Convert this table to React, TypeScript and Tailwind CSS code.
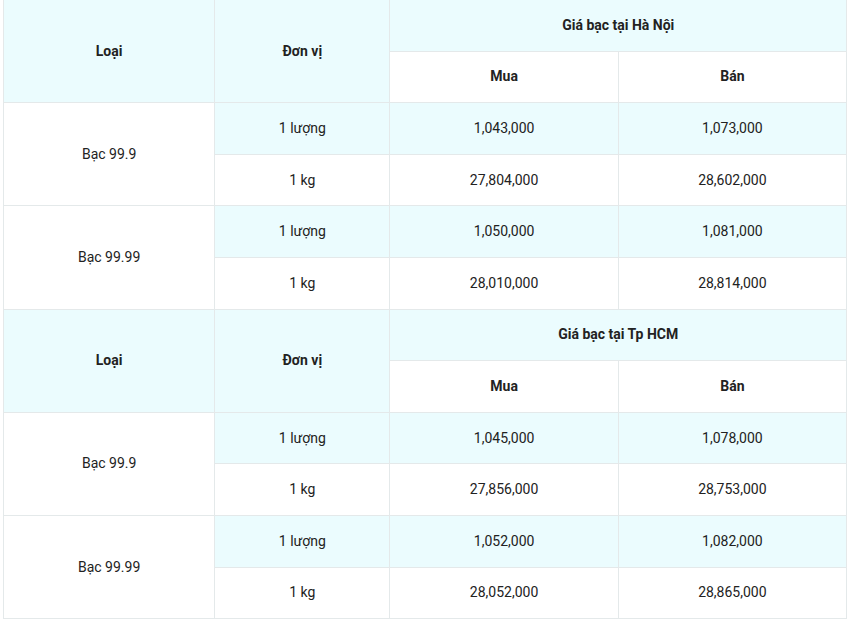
import React from "react";

const CY = "bg-[#ebfcfe]";
const TD = "border border-[#e4e9ea] text-center align-middle p-0";

type Block = {
  city: string;
  rows: { type: string; items: { unit: string; buy: string; sell: string }[] }[];
};

const blocks: Block[] = [
  {
    city: "Giá bạc tại Hà Nội",
    rows: [
      {
        type: "Bạc 99.9",
        items: [
          { unit: "1 lượng", buy: "1,043,000", sell: "1,073,000" },
          { unit: "1 kg", buy: "27,804,000", sell: "28,602,000" },
        ],
      },
      {
        type: "Bạc 99.99",
        items: [
          { unit: "1 lượng", buy: "1,050,000", sell: "1,081,000" },
          { unit: "1 kg", buy: "28,010,000", sell: "28,814,000" },
        ],
      },
    ],
  },
  {
    city: "Giá bạc tại Tp HCM",
    rows: [
      {
        type: "Bạc 99.9",
        items: [
          { unit: "1 lượng", buy: "1,045,000", sell: "1,078,000" },
          { unit: "1 kg", buy: "27,856,000", sell: "28,753,000" },
        ],
      },
      {
        type: "Bạc 99.99",
        items: [
          { unit: "1 lượng", buy: "1,052,000", sell: "1,082,000" },
          { unit: "1 kg", buy: "28,052,000", sell: "28,865,000" },
        ],
      },
    ],
  },
];

export default function App() {
  return (
    <div
      className="w-[850px] h-[621px] bg-white overflow-hidden pl-[3px] pr-[3px] text-[14px] text-[#222]"
      style={{ fontFamily: "Roboto, 'Noto Sans', sans-serif" }}
    >
      <table className="w-[844px] table-fixed border-collapse -mt-px">
        <colgroup>
          <col className="w-[211px]" />
          <col className="w-[175px]" />
          <col className="w-[228px]" />
          <col className="w-[228px]" />
        </colgroup>
        {blocks.map((b, bi) => (
          <tbody key={bi}>
            <tr className="h-[51.6px]">
              <td rowSpan={2} className={`${TD} ${CY} font-bold`}>Loại</td>
              <td rowSpan={2} className={`${TD} ${CY} font-bold`}>Đơn vị</td>
              <td colSpan={2} className={`${TD} ${CY} font-bold`}>{b.city}</td>
            </tr>
            <tr className="h-[51.6px]">
              <td className={`${TD} bg-white font-bold`}>Mua</td>
              <td className={`${TD} bg-white font-bold`}>Bán</td>
            </tr>
            {b.rows.map((r, ri) =>
              r.items.map((it, ii) => (
                <tr key={`${ri}-${ii}`} className="h-[51.6px]">
                  {ii === 0 && (
                    <td rowSpan={2} className={`${TD} bg-white`}>{r.type}</td>
                  )}
                  <td className={`${TD} ${ii === 0 ? CY : "bg-white"}`}>{it.unit}</td>
                  <td className={`${TD} ${ii === 0 ? CY : "bg-white"}`}>{it.buy}</td>
                  <td className={`${TD} ${ii === 0 ? CY : "bg-white"}`}>{it.sell}</td>
                </tr>
              ))
            )}
          </tbody>
        ))}
      </table>
    </div>
  );
}
